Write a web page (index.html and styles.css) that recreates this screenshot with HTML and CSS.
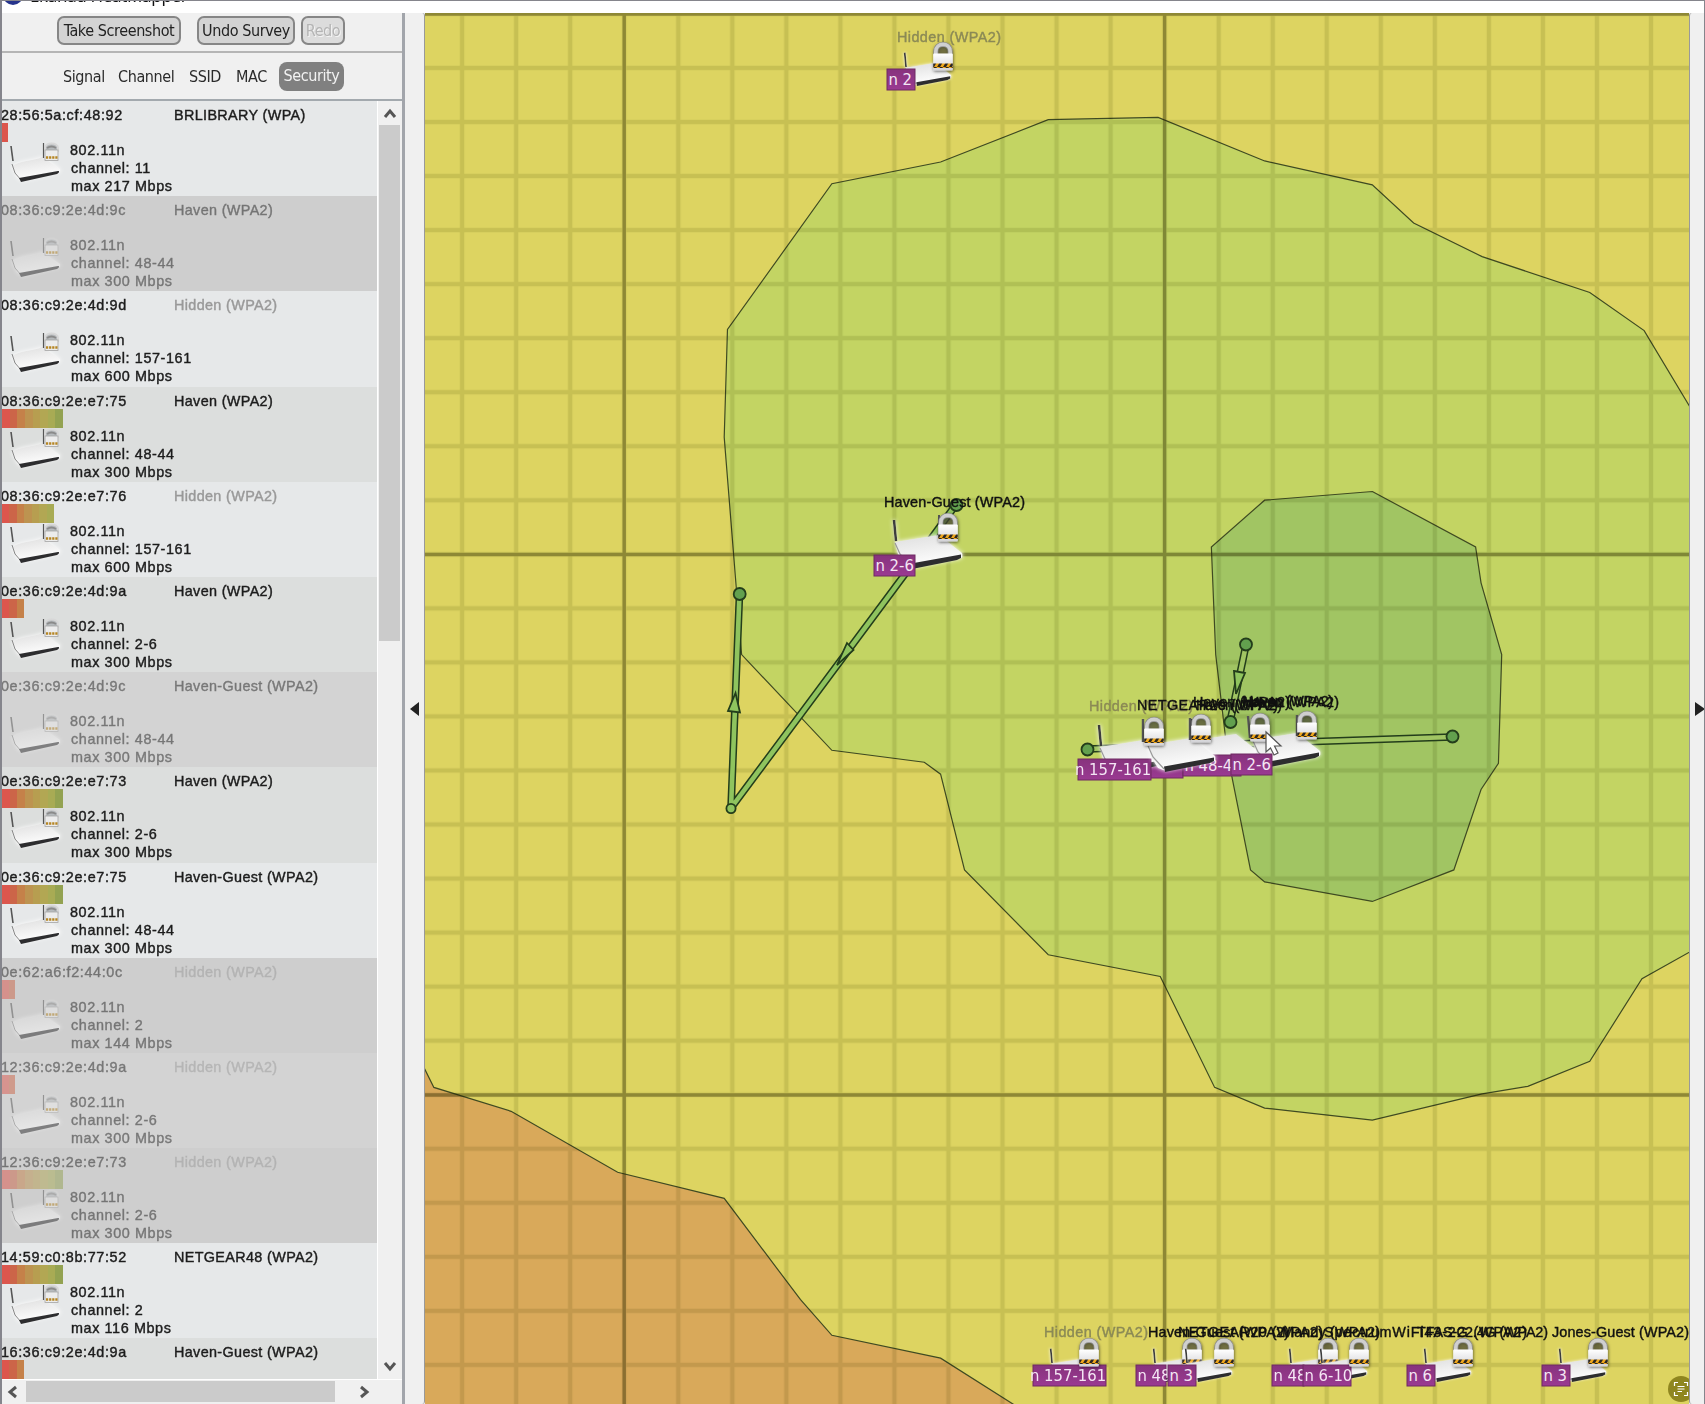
FILE: index.html
```html
<!DOCTYPE html>
<html lang="en">
<head>
<meta charset="utf-8">
<title>Ekahau HeatMapper</title>
<link rel="stylesheet" href="styles.css">
</head>
<body>
<svg class="defs" width="0" height="0">
  <defs>
    <linearGradient id="shell" x1="0" y1="0" x2="0.3" y2="1">
      <stop offset="0" stop-color="#dedede"/><stop offset="1" stop-color="#ffffff"/>
    </linearGradient>
    <linearGradient id="lockfill" x1="0" y1="0" x2="0" y2="1">
      <stop offset="0" stop-color="#ffffff"/><stop offset="1" stop-color="#d2d2d6"/>
    </linearGradient>
    <linearGradient id="tagfill" x1="0" y1="0" x2="0" y2="1">
      <stop offset="0" stop-color="#87337d"/><stop offset="1" stop-color="#9a3a92"/>
    </linearGradient>
    <pattern id="hazard" width="6" height="5" patternUnits="userSpaceOnUse">
      <rect width="6" height="5" fill="#f0a71c"/><path d="M0 5L3 0H6L3 5Z" fill="#2b2620"/>
    </pattern>
    <filter id="glow" x="-30%" y="-30%" width="160%" height="170%">
      <feDropShadow dx="0" dy="0" stdDeviation="2.2" flood-color="#fff" flood-opacity="1"/>
    </filter>
    <filter id="shade" x="-40%" y="-40%" width="180%" height="180%">
      <feDropShadow dx="0.5" dy="1" stdDeviation="1.8" flood-color="#000" flood-opacity=".6"/>
    </filter>
    <symbol id="lock" viewBox="-14 -17 28 36" width="28" height="36" overflow="visible">
      <g filter="url(#shade)">
        <path d="M-7.2 -2V-5.500C-7.200 -14.500 7.200 -14.500 7.200 -5.500V-2Z" fill="#4a4a3a" fill-opacity=".55"/>
        <path d="M-7.200 -2V-5.500C-7.200 -15 7.200 -15 7.200 -5.500V-2" fill="none" stroke="#8a8a8a" stroke-width="5"/>
        <path d="M-7.200 -2V-5.500C-7.200 -15 7.200 -15 7.200 -5.500V-2" fill="none" stroke="#cfcfcf" stroke-width="3.600"/>
        <rect x="-9.800" y="-3.500" width="19.600" height="17" rx="1" fill="url(#lockfill)"/>
      </g>
      <rect x="-9.800" y="6.500" width="19.600" height="4.500" fill="url(#hazard)"/>
    </symbol>
    <symbol id="router" viewBox="0 0 72 52" width="72" height="52" overflow="visible">
      <g filter="url(#glow)">
        <path d="M2 23L46 16L69 34C70 38 69 39 66 40L20 49L12 46L5 35Z" fill="url(#shell)"/>
        <path d="M1 1L3 22" stroke="#3d3d3d" stroke-width="2.6"/>
      </g>
      <path d="M2 24L7 35L18 47" fill="none" stroke="#999" stroke-width="1.2"/>
      <path d="M18 44.500L68 35.500V39L64 41L19 50Z" fill="#2d2d2f"/>
    </symbol>
    <symbol id="listicon" viewBox="0 0 54 48" width="54" height="48" overflow="visible">
      <g filter="url(#glow)">
        <path d="M4 25C16 18 28 20 34 16L52 28L52 31L14 40L9 36Z" fill="url(#shell)"/>
      </g>
      <path d="M3 5L5 20" stroke="#555" stroke-width="1.6"/>
      <path d="M4 23L7 32L13 39" fill="none" stroke="#888"/>
      <path d="M11 37L50 30C52 30 51 32 49 33L13 41Z" fill="#2d2d2f"/>
      <path d="M35.500 2V17" stroke="#555" stroke-width="1.200"/>
      <path d="M37 11V7C37 1 50 1 50 7V11" fill="#b6babd" stroke="#d7d7d7" stroke-width="2"/>
      <path d="M39 7Q43.500 4 48 7" fill="none" stroke="#8a8a8a" stroke-width="2"/>
      <rect x="37" y="9" width="13" height="10.500" fill="#ececec" stroke="#a5a5a5" stroke-width=".8"/>
      <path d="M38 16.500H50" stroke="#b58523" stroke-width="2.600" stroke-dasharray="2.200 .9"/>
    </symbol>
  </defs>
</svg>
<div class="window">
  <header class="titlebar"><i class="logo"></i><span class="caption">Ekahau HeatMapper</span></header>
  <div class="content">
    <aside class="sidebar">
      <div class="toolbar">
        <button class="btn shot">Take Screenshot</button>
        <button class="btn undo">Undo Survey</button>
        <button class="btn redo">Redo</button>
      </div>
      <nav class="sort">
        <span class="t1">Signal</span><span class="t2">Channel</span><span class="t3">SSID</span><span class="t4">MAC</span><span class="on">Security</span>
      </nav>
      <div class="scroller">
        <div class="list" id="list"></div>
        <div class="vbar">
          <svg class="arrow" viewBox="0 0 22 24"><path d="M6 16L11 10L16 16" /></svg>
          <div class="vthumb"></div><div class="space"></div>
          <svg class="arrow" viewBox="0 0 22 24"><path d="M6 8L11 14L16 8" /></svg>
        </div>
      </div>
      <div class="hbar">
        <svg class="harrow" viewBox="0 0 24 22"><path d="M14 6L8 11L14 16"/></svg>
        <div class="hthumb"></div>
        <svg class="harrow right" viewBox="0 0 24 22"><path d="M10 6L16 11L10 16"/></svg>
      </div>
    </aside>
    <div class="split"><i class="tri left"></i></div>
    <svg class="map" viewBox="425 13 1264 1391" width="1264" height="1391">
      <defs>
        <pattern id="minor" x="1110.6" y="13.9" width="54.04" height="54.04" patternUnits="userSpaceOnUse">
          <path d="M0 0H54.04M0 54.04H54.04M0 0V54.04M54.04 0V54.04" stroke="#e6e7da" stroke-width="4.400" fill="none"/>
        </pattern>
      </defs>
      <rect x="424" y="13" width="1265" height="1391" fill="#ddd461"/>
      <g transform="scale(1.0874)" stroke="#3f4a22" stroke-width="1.1">
        <path fill="#c3d463" d="M666 402L669 303L765 169L865 149L964 110L1065 108L1163 148L1262 170L1300 205L1363 236L1462 269L1512 304L1560 384V872L1510 900L1462 976L1405 999L1363 1006L1262 1030L1163 1019L1117 1000L1067 898L964 878L887 800L865 712L850 701L765 690L682 602Z"/>
        <path fill="#a1c563" d="M1262 452L1357 503L1362 536L1381 602L1378 702L1362 726L1337 800L1262 829L1163 811L1150 800L1133 715L1127 678L1118 602L1114 503L1163 460Z"/>
        <path fill="#d9a95a" d="M388 978L399 1000L470 1022L568 1078L666 1102L736 1195L765 1228L865 1249L936 1294H388Z"/>
      </g>
      <rect class="grid" x="424" y="13" width="1265" height="1391" fill="url(#minor)"/>
      <path d="M624.2 13V1404M1164.6 13V1404M424 14H1689M424 554.5H1689M424 1095H1689" stroke="#2a2400" stroke-opacity=".36" stroke-width="3.400" fill="none"/>

      <g fill="none" stroke-linecap="round" stroke-linejoin="round">
        <g stroke="#233d1b" stroke-width="7.600">
          <path d="M739.500 594L731 808L911 566L955 506"/>
          <path d="M1246 645L1230 722M1087 749L1452 737"/>
        </g>
        <g stroke="#8fc45e" stroke-width="4.600">
          <path d="M739.500 594L731 808L911 566L955 506"/>
          <path d="M1246 645L1230 722M1087 749L1452 737" stroke="#a1c563"/>
        </g>
      </g>
      <g fill="#8fc45e" stroke="#233d1b" stroke-width="1.8">
        <path d="M735.500 693L728 711L740 712.500Z"/><path d="M847 643L853.500 650L837 665Z"/><path d="M1234 671L1245 673L1236 694Z"/>
        <circle cx="731" cy="808.500" r="4.600"/>
        <g fill="#62a04e"><circle cx="739.700" cy="594" r="6"/><circle cx="956.500" cy="505" r="6"/><circle cx="1246" cy="644.500" r="6"/><circle cx="1230.500" cy="722" r="6"/><circle cx="1087.500" cy="749.500" r="6"/><circle cx="1452.500" cy="736.500" r="6"/></g>
      </g>

      <g class="names">
        <text class="faint" x="897" y="42" textLength="104">Hidden (WPA2)</text>
        <text x="884" y="507" textLength="141">Haven-Guest (WPA2)</text>
        <text class="faint" x="1089" y="711" textLength="104">Hidden (WPA2)</text>
        <text x="1137" y="710" textLength="145">NETGEAR20 (WPA2)</text>
        <text x="1193" y="707" textLength="97">Haven (WPA2)</text>
        <text x="1196" y="710" textLength="82">Haven (WPA2)</text>
        <text x="1242" y="707" textLength="97">Haven (WPA2)</text>
        <text x="1243" y="706" textLength="90">Haven (WPA2)</text>
        <text class="faint" x="1044" y="1337" textLength="104">Hidden (WPA2)</text>
        <text x="1148" y="1337" textLength="141">Haven-Guest (WPA2)</text>
        <text x="1178" y="1337" textLength="145">NETGEAR20 (WPA2)</text>
        <text x="1282" y="1337" textLength="98">Mandy (WPA2)</text>
        <text x="1324" y="1337" textLength="203">SpectrumWiFi43-2G (WPA2)</text>
        <text x="1417" y="1337" textLength="131">TFAS-22.4G (WPA2)</text>
        <text x="1552" y="1337" textLength="137">Jones-Guest (WPA2)</text>
      </g>

      <g id="markers"></g>

      <path d="M1266 732V752L1270.500 748L1274 755L1278 753L1274.500 746H1281Z" fill="#fff" stroke="#555" stroke-width="1.2"/>
      <g class="scan">
        <circle cx="1681" cy="1389" r="13" fill="#8f861f"/>
        <path d="M1674.500 1386V1382.500H1678M1684 1382.500H1687.500V1386M1687.500 1392V1395.500H1684M1678 1395.500H1674.500V1392M1677.500 1386.500H1684.500M1677.500 1389H1684.500M1677.500 1391.500H1682" fill="none" stroke="#fff" stroke-width="1.2"/>
      </g>
    </svg>
    <div class="split end"><i class="tri"></i></div>
  </div>
</div>
<script src="script.js"></script>
</body>
</html>
```
FILE: styles.css
```css
* { box-sizing: border-box; }
body { margin: 0; font-family: "DejaVu Sans Condensed", "DejaVu Sans", sans-serif; }
.defs { display: block; height: 0; }
.window {
  width: 1705px; height: 1404px; overflow: hidden;
  display: flex; flex-direction: column;
  background: #f0f0f0;
  border-top: 1px solid #85858c;
  border-left: 2px solid #85858c;
  border-right: 1px solid #85858c;
}
.titlebar { height: 12px; background: #fff; overflow: hidden; display: flex; gap: 5px; padding-left: 1px; }
.logo { width: 20px; height: 20px; flex: none; border-radius: 50%; background: #26348c; margin-top: -16px; }
.caption { font: 17px/24px "Noto Sans", sans-serif; color: #111; margin-top: -17px; white-space: nowrap; letter-spacing: -.35px; padding-left: 2px; }
.content { flex: 1; min-height: 0; display: flex; }
.sidebar { width: 403px; flex: none; display: flex; flex-direction: column; border-right: 3px solid #a2a5ab; }

.toolbar { height: 40px; display: flex; align-items: flex-start; padding: 3px 0 0 55px; border-bottom: 2px solid #b5b5b5; }
.btn {
  height: 29px; padding: 0; font: 16px/24px "DejaVu Sans Condensed", "DejaVu Sans", sans-serif; font-stretch: condensed; letter-spacing: -.4px; color: #222;
  border: 2px solid #868686; border-radius: 7px; background: #d3d3d3; white-space: nowrap;
}
.shot { width: 124px; }
.undo { width: 98px; margin-left: 16px; }
.redo { width: 44px; margin-left: 6px; background: #dcdcdc; color: #b4b4b4; text-shadow: 1px 1px #f4f4f4; line-height: 21px; }

.sort { height: 48px; display: flex; align-items: center; padding-left: 61px; font-size: 16px; font-stretch: condensed; color: #2b2b2b; border-bottom: 2px solid #a3a9ae; letter-spacing: -.4px; white-space: nowrap; }
.t1 { width: 55px; }
.t2 { width: 71px; }
.t3 { width: 47px; }
.t4 { width: 43px; }
.on { width: 65px; height: 29px; line-height: 28px; text-align: center; border-radius: 8px; color: #f2f2f2; background: #808080; }

.scroller { flex: 1; min-height: 0; display: flex; }
.list { width: 375px; overflow: hidden; font-family: "Liberation Sans", sans-serif; font-size: 14.4px; color: #1c1c1c; -webkit-text-stroke: .4px; }
.ap { height: 95.2px; display: grid; grid-template: 22px 19px 1fr / 62px 1fr; background: #e6e8e9; overflow: hidden; }
.ap.alt { background: #dcdedd; }
.ap.dim { background: #d3d3d3; }
.ap.dim.alt { background: #cecece; }
.dim > * { opacity: .5; }
.head { grid-column: 1 / 3; display: grid; grid-template-columns: 172px 1fr; line-height: 29px; height: 22px; white-space: nowrap; }
.mac { letter-spacing: .62px; margin-left: -1px; }
.ssid { letter-spacing: .35px; }
.ssid.hidden { color: #999; }
.bar { grid-column: 1 / 3; height: 19px; display: flex; }
.bar i { height: 19px; }
.icon { width: 54px; height: 48px; margin: -1px 0 0 6px; overflow: visible; }
.info { margin-top: -1px; padding-left: 6px; line-height: 18px; white-space: pre; letter-spacing: .6px; display: flex; flex-direction: column; }
.info span + span { padding-left: 1px; }

.vbar { width: 24px; display: flex; flex-direction: column; padding: 0 1px; background: #f0f0f0; border-left: 1px solid #fff; }
.arrow { width: 22px; height: 24px; }
.arrow path, .harrow path { fill: none; stroke: #555; stroke-width: 3; }
.vthumb { height: 516px; background: #cbcbcb; }
.space { flex: 1; }
.hbar { height: 25px; display: flex; padding: 1px 0 2px; border-top: 1px solid #fff; align-items: center; }
.harrow { width: 24px; height: 22px; flex: none; }
.hthumb { width: 309px; height: 21px; background: #cbcbcb; }
.right { margin-left: 16px; }

.split { width: 20px; flex: none; display: flex; align-items: center; justify-content: center; background: #f0f0f0; border-right: 1px solid #999; border-radius: 3px; }
.tri { border: 7px solid transparent; border-left: 10px solid #222; border-right: 0; }
.tri.left { border-left: 0; border-right: 9px solid #222; }
.split.end { width: 15px; border-right: 0; border-left: 1px solid #999; justify-content: flex-start; padding-left: 5px; }
.map { display: block; flex: none; }
.grid { mix-blend-mode: multiply; }
.names text { font: 14.4px "Liberation Sans", sans-serif; fill: #111; stroke: #111; stroke-width: .4px; }
.names text.faint { fill: #8b8a55; stroke: #8b8a55; }
.tag { font: 16.5px "DejaVu Sans Condensed", "DejaVu Sans", sans-serif; font-stretch: condensed; fill: #f4e6f4; }
```
FILE: script.js
```js
const colors = ['#dc564d', '#cc6548', '#c58149', '#bd9350', '#b79e50', '#b2a753', '#a8ab54', '#93a251'];
// mac, ssid, channel, max rate, bar width, alternate shade, dimmed
const rows = [
  ['28:56:5a:cf:48:92', 'BRLIBRARY (WPA)', '11', 217, 6, 0, 0],
  ['08:36:c9:2e:4d:9c', 'Haven (WPA2)', '48-44', 300, 0, 1, 1],
  ['08:36:c9:2e:4d:9d', 'Hidden (WPA2)', '157-161', 600, 0, 0, 0],
  ['08:36:c9:2e:e7:75', 'Haven (WPA2)', '48-44', 300, 61, 1, 0],
  ['08:36:c9:2e:e7:76', 'Hidden (WPA2)', '157-161', 600, 52, 0, 0],
  ['0e:36:c9:2e:4d:9a', 'Haven (WPA2)', '2-6', 300, 22, 1, 0],
  ['0e:36:c9:2e:4d:9c', 'Haven-Guest (WPA2)', '48-44', 300, 0, 0, 1],
  ['0e:36:c9:2e:e7:73', 'Haven (WPA2)', '2-6', 300, 61, 1, 0],
  ['0e:36:c9:2e:e7:75', 'Haven-Guest (WPA2)', '48-44', 300, 61, 0, 0],
  ['0e:62:a6:f2:44:0c', 'Hidden (WPA2)', '2', 144, 13, 1, 1],
  ['12:36:c9:2e:4d:9a', 'Hidden (WPA2)', '2-6', 300, 13, 0, 1],
  ['12:36:c9:2e:e7:73', 'Hidden (WPA2)', '2-6', 300, 61, 1, 1],
  ['14:59:c0:8b:77:52', 'NETGEAR48 (WPA2)', '2', 116, 61, 0, 0],
  ['16:36:c9:2e:4d:9a', 'Haven-Guest (WPA2)', '2-6', 300, 22, 1, 0]
];
document.getElementById('list').innerHTML = rows.map(([mac, ssid, ch, max, w, alt, dim]) => {
  const n = Math.round(w / 7.6);
  const bar = colors.slice(0, n).map(c => `<i style="width:${w / n}px;background:${c}"></i>`).join('');
  return `<div class="ap${alt ? ' alt' : ''}${dim ? ' dim' : ''}">
    <div class="head"><span class="mac">${mac}</span><span class="ssid${ssid.startsWith('Hidden') ? ' hidden' : ''}">${ssid}</span></div>
    <div class="bar">${bar}</div>
    <svg class="icon"><use href="#listicon"/></svg>
    <div class="info"><span>802.11n</span><span>channel: ${ch}</span><span>max ${max} Mbps</span></div></div>`;
}).join('');

const router = (x, y, s) => `<g transform="translate(${x} ${y}) scale(${s})"><use href="#router"/></g>`;
const lock = (x, y) => `<use href="#lock" x="${x - 14}" y="${y - 17}"/>`;
const tag = (x, y, w, t) => `<rect x="${x}" y="${y}" width="${w}" height="21" fill="url(#tagfill)" stroke="#6f2a62"/>` +
  `<text class="tag" x="${t.length > 8 ? x - 3 : x + 1.5}" y="${y + 16}">${t}</text>`;
const small = (x, y, w, t) => router(x, y, .68) + tag(x - 17, y + 17, w, t) + lock(x + 39, y + 5);
document.getElementById('markers').innerHTML =
  small(904, 52, 28, 'n 2') +
  router(893, 519, 1) + '<path d="M939 515V534" stroke="#555" stroke-width="2"/>' + tag(874, 555, 41, 'n 2-6') + lock(948, 528) +
  tag(1145, 757, 38, '') + router(1190, 718, 1) + tag(1183, 755, 58, 'n 48-4') +
  router(1098, 724, 1) + tag(1078, 759, 73, 'n 157-161') +
  router(1146, 722, 1) + router(1251, 717, 1) + tag(1231, 754, 41, 'n 2-6') +
  '<path d="M1143 719V742M1190 718V740M1248 716L1250 738M1297 715V736" stroke="#555" stroke-width="2.4"/>' +
  lock(1154, 732) + lock(1201, 729) + lock(1260, 728) + lock(1307, 726) +
  small(1050, 1348, 73, 'n 157-161') +
  small(1153, 1348, 30, 'n 48') + small(1185, 1348, 28, 'n 3') +
  small(1289, 1348, 32, 'n 48') + small(1320, 1348, 48, 'n 6-10') +
  small(1424, 1348, 28, 'n 6') + small(1559, 1348, 28, 'n 3');
```
